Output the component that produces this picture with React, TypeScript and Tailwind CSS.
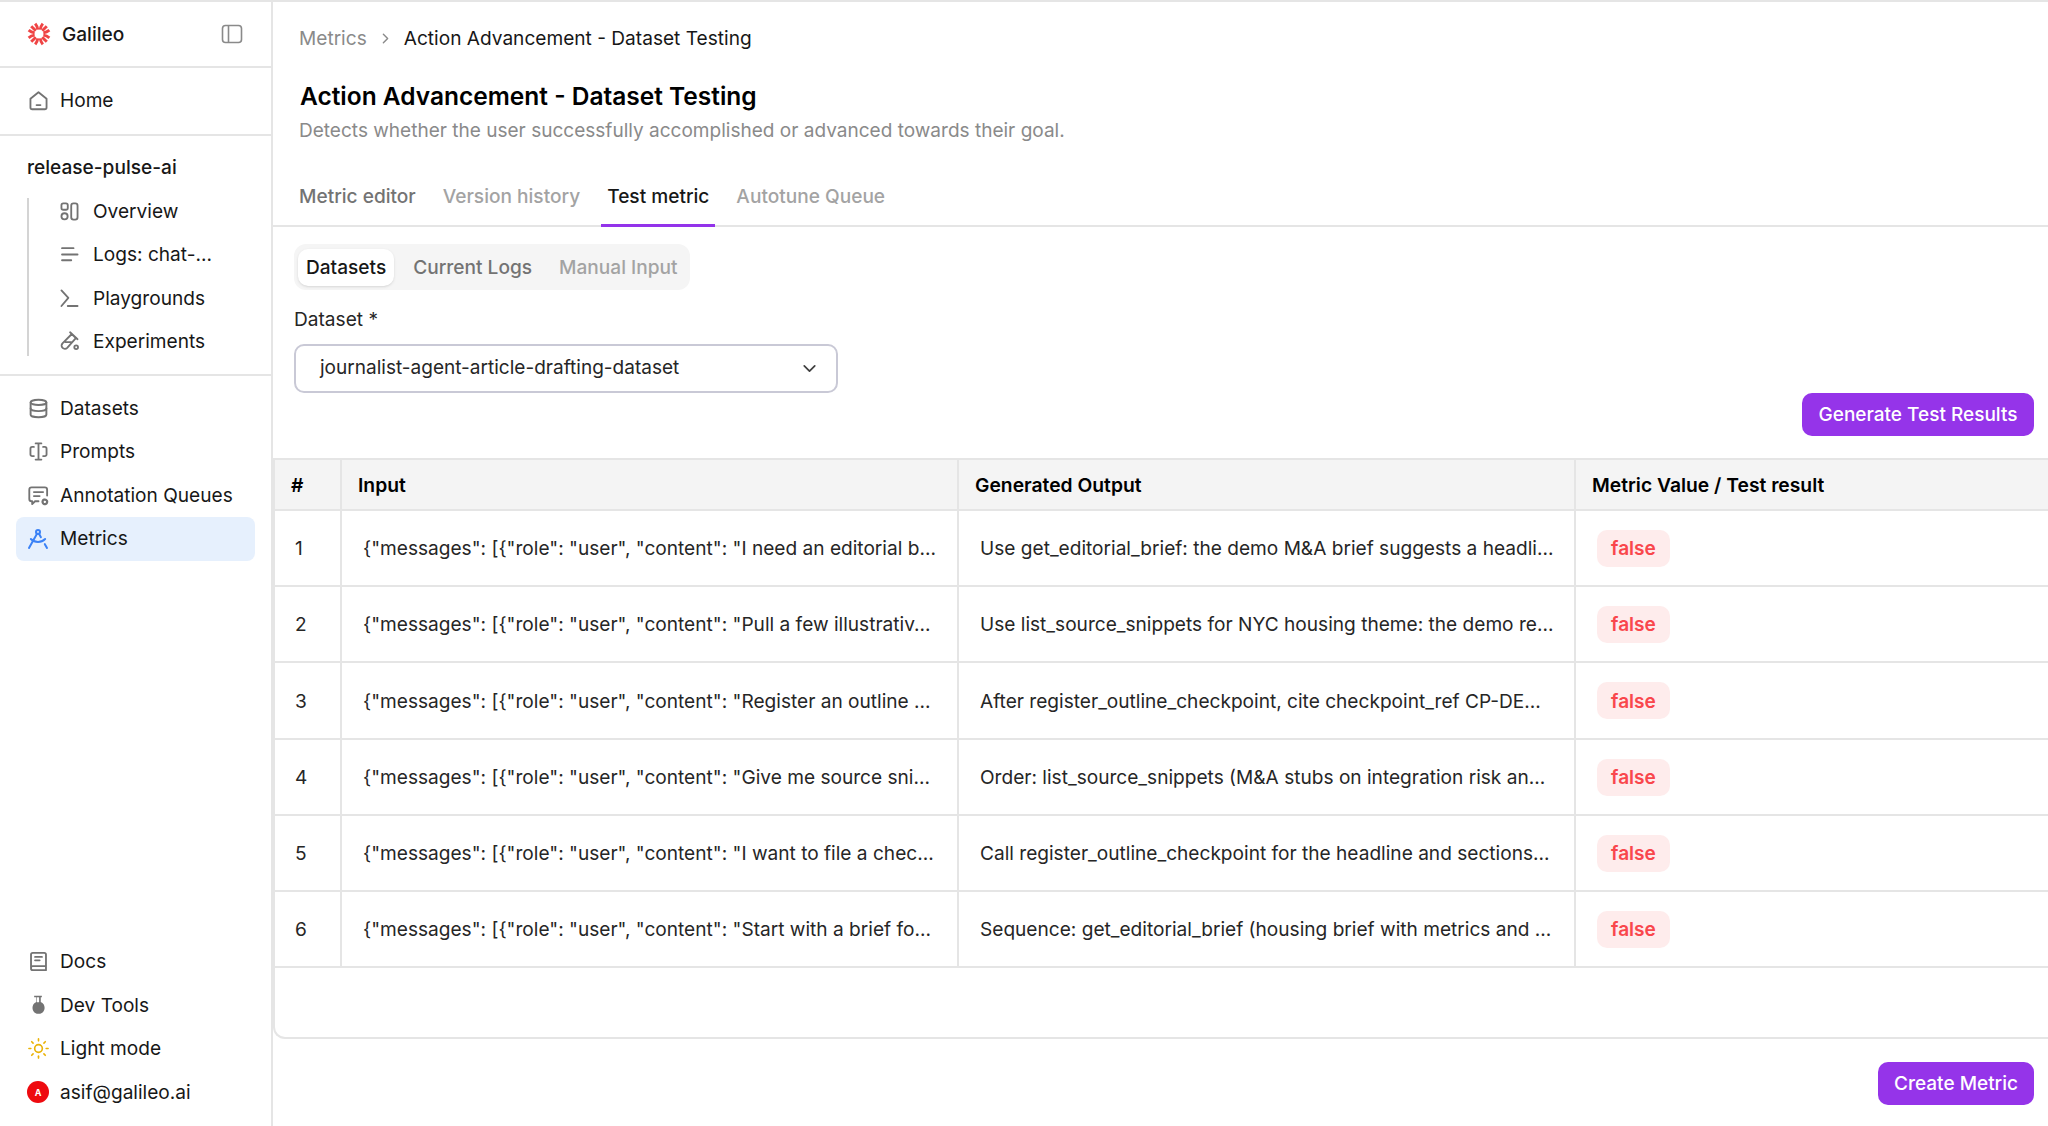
import type { ReactNode } from "react";
import { ChevronDown, ChevronRight, Database, DraftingCompass, Sun } from "lucide-react";

const ROWS = [
  { input: '{"messages": [{"role": "user", "content": "I need an editorial b...', output: "Use get_editorial_brief: the demo M&A brief suggests a headli..." },
  { input: '{"messages": [{"role": "user", "content": "Pull a few illustrativ...', output: "Use list_source_snippets for NYC housing theme: the demo re..." },
  { input: '{"messages": [{"role": "user", "content": "Register an outline ...', output: "After register_outline_checkpoint, cite checkpoint_ref CP-DE..." },
  { input: '{"messages": [{"role": "user", "content": "Give me source sni...', output: "Order: list_source_snippets (M&A stubs on integration risk an..." },
  { input: '{"messages": [{"role": "user", "content": "I want to file a chec...', output: "Call register_outline_checkpoint for the headline and sections..." },
  { input: '{"messages": [{"role": "user", "content": "Start with a brief fo...', output: "Sequence: get_editorial_brief (housing brief with metrics and ..." },
];

function Stroke({ children, size = 23 }: { children: ReactNode; size?: number }) {
  return (
    <svg className="shrink-0" width={size} height={size} viewBox="0 0 20 20" fill="none" stroke="#737373" strokeWidth="1.6" strokeLinecap="round" strokeLinejoin="round">
      {children}
    </svg>
  );
}

function GalileoLogo() {
  const rays = [15, 45, 75, 105, 135, 165, 195, 225, 255, 285, 315, 345];
  return (
    <svg width="24" height="24" viewBox="0 0 24 24" fill="none" stroke="#ef4444" strokeWidth="2.9">
      {rays.map((a, i) => (
        <path key={a} transform={`rotate(${a} 12 12)`} d={i % 3 === 1 ? "M12 7.500V1" : i % 3 === 0 ? "M12 7.500Q11.600 4 13 1" : "M12 7.500Q12.400 4 11 1"} />
      ))}
    </svg>
  );
}

function NavItem({ icon, label, active }: { icon: ReactNode; label: string; active?: boolean }) {
  return (
    <div className={`flex h-[43.5px] items-center gap-[12px] rounded-lg pl-[12px] pr-[11px] ${active ? "bg-[#e6f0fd]" : ""}`}>
      <span className="flex w-[20px] shrink-0 items-center justify-center">{icon}</span>
      <span className="text-[19.1px] text-[#171717]">{label}</span>
    </div>
  );
}

function ProjectItem({ icon, label }: { icon: ReactNode; label: string }) {
  return (
    <div className="flex h-[43.5px] items-center gap-[14px]">
      <span className="flex w-[20px] shrink-0 items-center justify-center">{icon}</span>
      <span className="text-[19.1px] text-[#171717]">{label}</span>
    </div>
  );
}

function Sidebar() {
  return (
    <aside className="flex w-[273px] shrink-0 flex-col border-r-2 border-[#e5e5e5]">
      <div className="flex h-[66px] items-center justify-between border-b-2 border-[#e5e5e5] pl-[27px] pr-[28px]">
        <div className="flex items-center gap-[11px]">
          <GalileoLogo />
          <span className="text-[19.1px] font-medium text-[#171717]">Galileo</span>
        </div>
        <svg width="22" height="22" viewBox="0 0 22 22" fill="none" stroke="#8a8a8a" strokeWidth="1.6">
          <rect x="1.500" y="2.500" width="19" height="17" rx="3" />
          <path d="M7.500 2.500v17" />
        </svg>
      </div>

      <div className="border-b-2 border-[#e5e5e5] px-[16px] py-[11px]">
        <NavItem
          label="Home"
          icon={
            <Stroke>
              <path d="M3 8.500 10 2.800l7 5.700V16a1.600 1.600 0 0 1-1.600 1.600H4.600A1.600 1.600 0 0 1 3 16Z" />
              <path d="M8.300 14h3.400" />
            </Stroke>
          }
        />
      </div>

      <div className="border-b-2 border-[#e5e5e5] px-[27px] pb-[10px] pt-[18.5px]">
        <div className="mb-[9.5px] text-[19.1px] font-medium leading-[26px] text-[#171717]">release-pulse-ai</div>
        <div className="flex">
          <div className="my-[8px] w-[2px] bg-[#d4d4d4]" />
          <div className="pl-[30px]">
            <ProjectItem
              label="Overview"
              icon={
                <Stroke>
                  <rect x="3" y="3" width="5.500" height="5.500" rx="1.600" />
                  <circle cx="5.700" cy="14.200" r="2.700" />
                  <rect x="11.500" y="3" width="5.500" height="14" rx="2" />
                </Stroke>
              }
            />
            <ProjectItem
              label="Logs: chat-..."
              icon={
                <Stroke>
                  <path d="M3.500 4.500h10M3.500 10h13.500M3.500 15h8" />
                </Stroke>
              }
            />
            <ProjectItem
              label="Playgrounds"
              icon={
                <Stroke>
                  <path d="m3 3 6 6.500L3 16.500M8.500 16.500H17" />
                </Stroke>
              }
            />
            <ProjectItem
              label="Experiments"
              icon={
                <Stroke>
                  <path d="M12 3.500 15.500 7 8 15.500a2.800 2.800 0 0 1-4.100-3.900ZM10.500 2l6.500 6M6.500 10.500h5" />
                  <circle cx="15.800" cy="15" r="1.600" />
                </Stroke>
              }
            />
          </div>
        </div>
      </div>

      <div className="flex flex-1 flex-col justify-between px-[16px] pb-[12px] pt-[11px]">
        <div>
          <NavItem label="Datasets" icon={<Database className="shrink-0" size={21} color="#737373" strokeWidth={2.2} />} />
          <NavItem
            label="Prompts"
            icon={
              <Stroke>
                <path d="M7.500 3h5M7.500 17h5M10 3v14M6 6H4.500A1.500 1.500 0 0 0 3 7.500v5A1.500 1.500 0 0 0 4.500 14H6M14 6h1.500A1.500 1.500 0 0 1 17 7.500v5a1.500 1.500 0 0 1-1.500 1.500H14" />
              </Stroke>
            }
          />
          <NavItem
            label="Annotation Queues"
            icon={
              <Stroke>
                <path d="M10 15H7l-2.500 2.500V15H4a2 2 0 0 1-2-2V5a2 2 0 0 1 2-2h11.500a2 2 0 0 1 2 2v5" />
                <path d="M6 7h8M6 10.500h5" />
                <circle cx="15.500" cy="15.500" r="2" strokeWidth="2" strokeDasharray="1.500 0.600" />
              </Stroke>
            }
          />
          <NavItem label="Metrics" active icon={<DraftingCompass className="shrink-0" size={24} color="#3b82f6" strokeWidth={2} />} />
        </div>
        <div>
          <NavItem
            label="Docs"
            icon={
              <Stroke>
                <path d="M3.500 15V4A1.500 1.500 0 0 1 5 2.500h10A1.500 1.500 0 0 1 16.500 4v13.500H5A1.500 1.500 0 0 1 3.500 16V15A1.500 1.500 0 0 1 5 14h11.500" />
                <path d="M7 6h6M7 9h4" />
              </Stroke>
            }
          />
          <NavItem
            label="Dev Tools"
            icon={
              <svg className="shrink-0" width="22" height="22" viewBox="0 0 20 20" fill="#737373">
                <path d="M6.500 1.500h7V3h-1v4.200c2.300.9 3.500 3 3.500 5.300 0 3-2 5.500-5 5.500h-1c-3 0-5-2.500-5-5.500 0-2.300 1.200-4.400 3.500-5.300V3h-2Z" />
                <path d="M9 3h2v4.500H9Z" fill="#ffffff" />
              </svg>
            }
          />
          <NavItem label="Light mode" icon={<Sun className="shrink-0" size={23} color="#eab308" strokeWidth={1.7} />} />
          <NavItem
            label="asif@galileo.ai"
            icon={
              <span className="flex h-[22px] w-[22px] shrink-0 items-center justify-center rounded-full bg-[#ee0a0f] text-[9px] font-bold text-white">A</span>
            }
          />
        </div>
      </div>
    </aside>
  );
}

function Table() {
  return (
    <div className="flex flex-1 flex-col overflow-hidden rounded-bl-xl border-y-2 border-l-2 border-[#e5e5e5]">
      <div className="grid h-[51px] grid-cols-[67px_617px_617px_1fr] border-b-2 border-[#e5e5e5] bg-[#f4f4f4] text-[19.3px] font-semibold text-black">
        <div className="flex items-center border-r-2 border-[#e5e5e5] pl-[16px] pt-[1px]">#</div>
        <div className="flex items-center border-r-2 border-[#e5e5e5] pl-[16px] pt-[1px]">Input</div>
        <div className="flex items-center border-r-2 border-[#e5e5e5] pl-[16px] pt-[1px]">Generated Output</div>
        <div className="flex items-center pl-[16px] pt-[1px]">Metric Value / Test result</div>
      </div>
      {ROWS.map((row, i) => (
        <div key={i} className="grid h-[76.2px] grid-cols-[67px_617px_617px_1fr] border-b-2 border-[#e5e5e5] text-[19.1px] text-[#262626]">
          <div className="flex items-center border-r-2 border-[#e5e5e5] pl-[20px] pt-[1px]">{i + 1}</div>
          <div className="flex items-center overflow-hidden whitespace-nowrap border-r-2 border-[#e5e5e5] pl-[21px] pt-[1px]">{row.input}</div>
          <div className="flex items-center overflow-hidden whitespace-nowrap border-r-2 border-[#e5e5e5] pl-[21px] pt-[1px]">{row.output}</div>
          <div className="flex items-center pl-[21px] pt-[1px]">
            <span className="flex h-[37px] w-[73px] items-center justify-center rounded-[10px] bg-[#feecec] font-semibold text-[#f9474c]">false</span>
          </div>
        </div>
      ))}
    </div>
  );
}

function Main() {
  return (
    <main className="flex min-w-0 flex-1 flex-col">
      <div className="px-[26px]">
        <div className="flex h-[54px] items-center gap-[10px] pt-[18px] text-[19.1px]">
          <span className="text-[#8a8a8a]">Metrics</span>
          <ChevronRight size={17} color="#8a8a8a" />
          <span className="text-[#171717]">Action Advancement - Dataset Testing</span>
        </div>
        <h1 className="ml-[1px] mt-[22px] text-[24.5px] font-semibold leading-[36px] text-black">Action Advancement - Dataset Testing</h1>
        <p className="mt-[4px] text-[19.05px] leading-[26px] text-[#8a8a8a]">Detects whether the user successfully accomplished or advanced towards their goal.</p>
      </div>

      <div className="mt-[29px] flex h-[54px] gap-[27px] border-b-2 border-[#e5e5e5] px-[26px] text-[19.1px] font-medium">
        <div className="flex items-center pb-[5px] text-[#737373]">Metric editor</div>
        <div className="flex items-center pb-[5px] text-[#a3a3a3]">Version history</div>
        <div className="-mx-[6px] -mb-[2px] flex items-center border-b-[3px] border-[#9333ea] px-[6px] pb-[5px] text-[#171717]">Test metric</div>
        <div className="flex items-center pb-[5px] text-[#a3a3a3]">Autotune Queue</div>
      </div>

      <div className="pl-[21px] pr-[14px] pt-[17px]">
        <div className="flex h-[46px] w-fit items-center gap-[11px] rounded-xl bg-[#f5f5f5] px-[4px] text-[19.1px] font-medium">
          <div className="flex h-[37px] items-center rounded-[10px] bg-white px-[8px] text-[#171717] shadow-sm">Datasets</div>
          <div className="flex h-[37px] items-center px-[8px] text-[#737373]">Current Logs</div>
          <div className="flex h-[37px] items-center px-[8px] text-[#a3a3a3]">Manual Input</div>
        </div>
        <div className="mt-[16px] text-[19.1px] leading-[26px] text-[#262626]">Dataset *</div>
        <div className="mt-[12px] flex h-[49px] w-[544px] items-center justify-between rounded-[10px] border-2 border-[#c9c9d6] pl-[24px] pr-[16px] text-[19.05px] text-[#262626]">
          <span>journalist-agent-article-drafting-dataset</span>
          <ChevronDown size={21} color="#404040" />
        </div>
        <div className="flex justify-end">
          <button className="h-[43px] w-[232px] rounded-[10px] bg-[#9534e9] pt-[2px] text-[19px] font-medium text-white">Generate Test Results</button>
        </div>
      </div>

      <div className="mt-[22px] flex flex-1 flex-col">
        <Table />
      </div>

      <div className="flex h-[87px] items-start justify-end pr-[14px] pt-[23px]">
        <button className="h-[43px] w-[156px] rounded-[10px] bg-[#9534e9] pt-[2px] text-[19px] font-medium text-white">Create Metric</button>
      </div>
    </main>
  );
}

export default function App() {
  return (
    <div className="flex h-[1126px] w-[2048px] flex-col overflow-hidden border-t-2 border-[#e5e5e5] bg-white font-['Inter',sans-serif]">
      <div className="flex min-h-0 flex-1">
        <Sidebar />
        <Main />
      </div>
    </div>
  );
}
